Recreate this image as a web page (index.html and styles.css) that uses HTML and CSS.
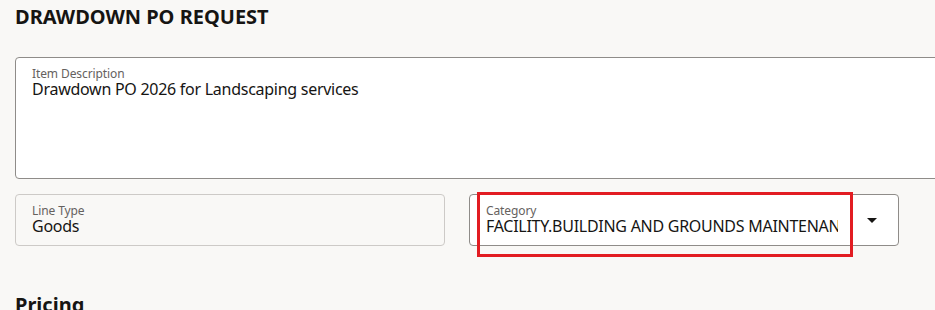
FILE: index.html
```html
<!DOCTYPE html>
<html lang="en">
<head>
    <meta charset="UTF-8">
    <meta name="viewport" content="width=device-width, initial-scale=1.0">
    <title>Drawdown PO Request</title>
    <link rel="stylesheet" href="styles.css">
</head>
<body>

<div class="page">
    <h1 class="titulo">DRAWDOWN PO REQUEST</h1>

    <!-- Descricao do item -->
    <div class="campo campo-texto">
        <span class="rotulo">Item Description</span>
        <span class="valor">Drawdown PO 2026 for Landscaping services</span>
    </div>

    <div class="linha">
        <div class="campo campo-leitura">
            <span class="rotulo">Line Type</span>
            <span class="valor">Goods</span>
        </div>

        <div class="campo campo-select">
            <div class="select-texto">
                <span class="rotulo">Category</span>
                <span class="valor">FACILITY.BUILDING AND GROUNDS MAINTENANCE</span>
            </div>
            <span class="seta"></span>
            <!-- marcacao vermelha -->
            <div class="destaque"></div>
        </div>
    </div>

    <h2 class="secao">Pricing</h2>
</div>

</body>
</html>
```

FILE: styles.css
```css
html, body {
    overflow: hidden;
}

body {
    font-family: 'Noto Sans', 'Open Sans', sans-serif;
    background-color: #f9f8f6;
    color: #161513;
    margin: 0;
    padding: 0;
}

.page {
    width: 1400px;
    padding: 3px 15px 0 15px;
}

.titulo {
    font-size: 20px;
    font-weight: 700;
    line-height: 28px;
    margin: 0 0 26px 0;
}

.campo {
    display: flex;
    flex-direction: column;
    box-sizing: border-box;
    border: 1px solid #8f8c89;
    border-radius: 4px;
    background-color: white;
    padding: 8px 16px 10px 16px;
}

.rotulo {
    font-size: 12px;
    line-height: 15px;
    color: #65615e;
    letter-spacing: -0.1px;
}

.valor {
    font-size: 16px;
    line-height: 17px;
    letter-spacing: -0.27px;
    white-space: nowrap;
}

.campo-texto {
    height: 122px;
}

.linha {
    display: grid;
    grid-template-columns: 430px 430px;
    gap: 24px;
    margin-top: 15px;
}

.campo-leitura {
    height: 52px;
    background-color: #f9f8f6;
    border-color: #cdcac7;
}

.campo-select {
    height: 52px;
    flex-direction: row;
    align-items: center;
    padding: 0 0 0 16px;
    position: relative;
}

.select-texto {
    display: flex;
    flex-direction: column;
    width: 352px;
    overflow: hidden;
    padding: 8px 0 10px 0;
}

.seta {
    margin-left: 29px;
    width: 0;
    height: 0;
    border-left: 5px solid transparent;
    border-right: 5px solid transparent;
    border-top: 5px solid #161513;
}

.destaque {
    position: absolute;
    left: 7px;
    top: -3px;
    width: 376px;
    height: 65px;
    box-sizing: border-box;
    border: 3px solid #e21c22;
}

.secao {
    font-size: 20px;
    font-weight: 700;
    line-height: 28px;
    margin: 45px 0 0 0;
}
```
